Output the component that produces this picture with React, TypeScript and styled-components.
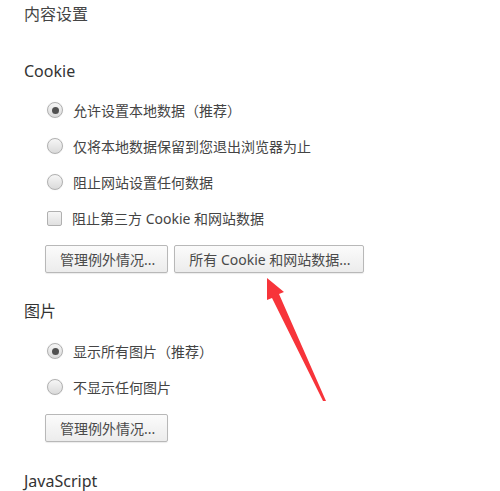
import { createGlobalStyle, styled } from "styled-components";

const GlobalStyle = createGlobalStyle`
  html, body {
    margin: 0;
    padding: 0;
    background: #ffffff;
  }
  body {
    font-family: "Noto Sans", "Noto Sans CJK SC", sans-serif;
    color: #333333;
  }
`;

const Page = styled.div`
  position: relative;
  width: 500px;
  height: 491px;
  overflow: hidden;
  padding: 4px 0 0 24px;
  box-sizing: border-box;
`;

const Title = styled.div`
  font-size: 16px;
  line-height: 20px;
  color: #444;
`;

const SectionTitle = styled.div<{ $gap: number }>`
  margin-top: ${(p) => p.$gap}px;
  font-size: 16px;
  line-height: 20px;
  color: #333;
`;

const Options = styled.div<{ $gap: number }>`
  margin-top: ${(p) => p.$gap}px;
  margin-left: 23px;
  display: flex;
  flex-direction: column;
`;

const Option = styled.label`
  display: flex;
  align-items: center;
  height: 36px;
  font-size: 14px;
  color: #444;
`;

const Radio = styled.span<{ $checked?: boolean }>`
  width: 16px;
  height: 16px;
  box-sizing: border-box;
  border-radius: 50%;
  border: 1px solid #b0b0b0;
  background: linear-gradient(#f6f6f6, #dadada);
  box-shadow: 0 0 1px rgba(0, 0, 0, 0.15);
  margin-right: 10px;
  display: flex;
  align-items: center;
  justify-content: center;
  &::after {
    content: "";
    display: ${(p) => (p.$checked ? "block" : "none")};
    width: 7px;
    height: 7px;
    border-radius: 50%;
    background: #505050;
  }
`;

const Checkbox = styled.span`
  width: 15px;
  height: 15px;
  box-sizing: border-box;
  border: 1px solid #b0b0b0;
  border-radius: 2px;
  background: linear-gradient(#f6f6f6, #e0e0e0);
  margin-right: 10px;
`;

const ButtonRow = styled.div`
  display: flex;
  gap: 6px;
  margin-top: 9px;
  margin-left: 21px;
`;

const Button = styled.button`
  height: 28px;
  padding: 0 12px 0 14px;
  border: 1px solid #b8b8b8;
  border-radius: 2px;
  background: linear-gradient(#fbfbfb, #ececec);
  box-shadow: 0 1px 1px rgba(0, 0, 0, 0.08);
  font-family: "Noto Sans", "Noto Sans CJK SC", sans-serif;
  font-size: 14px;
  color: #4a4a4a;
  white-space: nowrap;
`;

const Arrow = styled.svg`
  position: absolute;
  left: 0;
  top: 0;
  pointer-events: none;
`;

export default function App() {
  return (
    <>
      <GlobalStyle />
      <Page>
        <Title>内容设置</Title>

        <SectionTitle $gap={37}>Cookie</SectionTitle>
        <Options $gap={11}>
          <Option>
            <Radio $checked />
            允许设置本地数据（推荐）
          </Option>
          <Option>
            <Radio />
            仅将本地数据保留到您退出浏览器为止
          </Option>
          <Option>
            <Radio />
            阻止网站设置任何数据
          </Option>
          <Option>
            <Checkbox />
            阻止第三方 Cookie 和网站数据
          </Option>
        </Options>
        <ButtonRow>
          <Button>管理例外情况...</Button>
          <Button>所有 Cookie 和网站数据...</Button>
        </ButtonRow>

        <SectionTitle $gap={28}>图片</SectionTitle>
        <Options $gap={12}>
          <Option>
            <Radio $checked />
            显示所有图片（推荐）
          </Option>
          <Option>
            <Radio />
            不显示任何图片
          </Option>
        </Options>
        <ButtonRow>
          <Button>管理例外情况...</Button>
        </ButtonRow>

        <SectionTitle $gap={29}>JavaScript</SectionTitle>

        <Arrow width="500" height="491" viewBox="0 0 500 491">
          <polygon
            points="267,278 284,292 279,294 326,401 323,401 272,298 267,300"
            fill="#f7343a"
          />
        </Arrow>
      </Page>
    </>
  );
}
